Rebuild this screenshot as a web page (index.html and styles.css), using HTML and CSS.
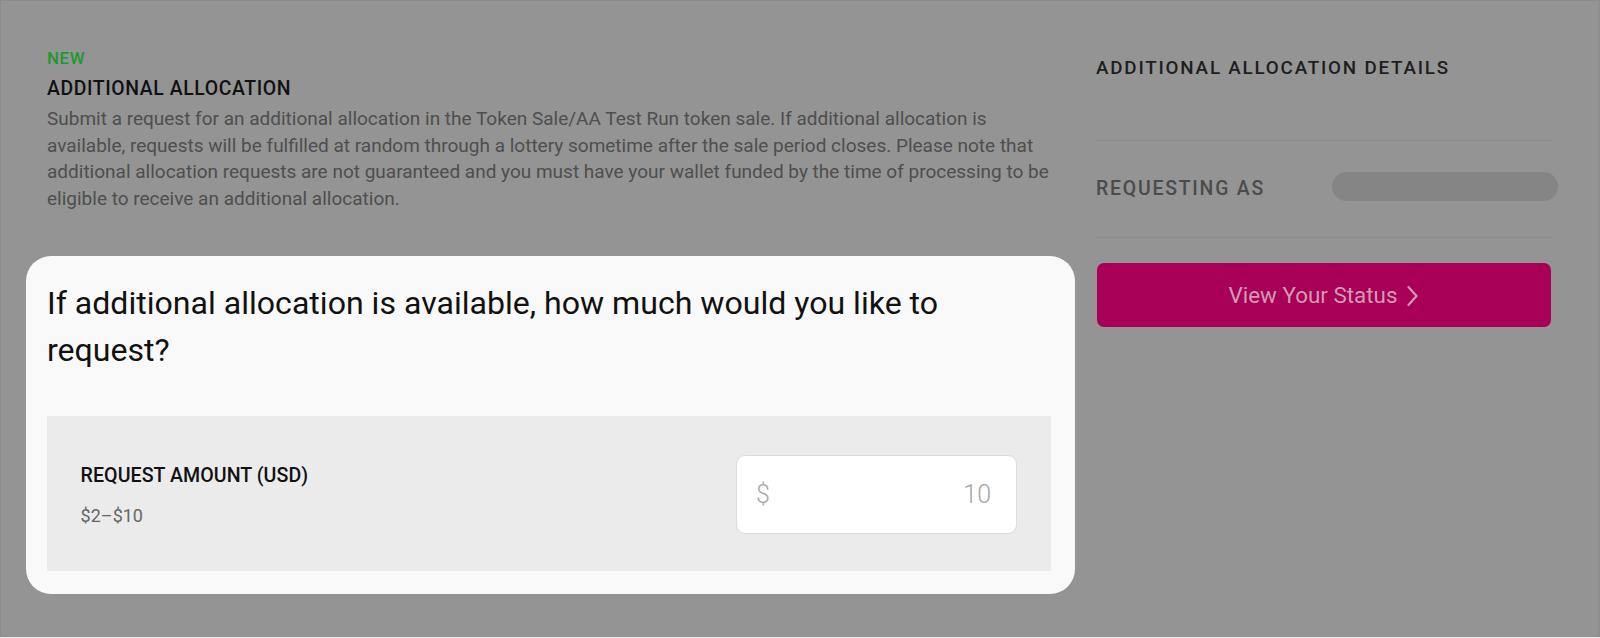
FILE: index.html
```html
<!DOCTYPE html>
<html>
<head>
<meta charset="utf-8">
<link rel="stylesheet" href="styles.css">
</head>
<body>
<div class="frame">
  <div class="layout">
    <main class="main">
      <div class="eyebrow">NEW</div>
      <h1 class="heading">ADDITIONAL ALLOCATION</h1>
      <p class="intro">Submit a request for an additional allocation in the Token Sale/AA Test Run token sale. If additional allocation is available, requests will be fulfilled at random through a lottery sometime after the sale period closes. Please note that additional allocation requests are not guaranteed and you must have your wallet funded by the time of processing to be eligible to receive an additional allocation.</p>
      <section class="card">
        <h2 class="question">If additional allocation is available, how much would you like to request?</h2>
        <div class="field">
          <div class="field-text">
            <div class="field-label">REQUEST AMOUNT (USD)</div>
            <div class="field-range">$2–$10</div>
          </div>
          <div class="input">
            <span class="currency">$</span>
            <span class="amount">10</span>
          </div>
        </div>
      </section>
    </main>
    <aside class="side">
      <h3 class="side-title">ADDITIONAL ALLOCATION DETAILS</h3>
      <div class="side-row">
        <span class="side-label">REQUESTING AS</span>
        <span class="skeleton"></span>
      </div>
      <button class="status-btn">View Your Status
        <svg class="chev" width="13" height="24" viewBox="0 0 13 24"><path d="M2.5 3 L10.5 12 L2.5 21" fill="none" stroke="currentColor" stroke-width="2.2" stroke-linecap="round" stroke-linejoin="round"/></svg>
      </button>
    </aside>
  </div>
</div>
</body>
</html>
```

FILE: styles.css
```css
* { box-sizing: border-box; }
html, body { margin: 0; padding: 0; }
body {
  width: 1600px;
  height: 638px;
  background: #e6e6e6;
  font-family: Roboto, "Liberation Sans", sans-serif;
  overflow: hidden;
}
.frame {
  width: 1600px;
  height: 637px;
  background: #949494;
  border-top: 1px solid #8a8a90;
  border-left: 1px solid #8a8a90;
  border-right: 2px solid #8e8e92;
}
.layout {
  display: flex;
  gap: 45px;
  padding: 47px 0 0 46px;
}
.main {
  width: 1004px;
  flex: none;
}
.eyebrow {
  color: #1b9a2c;
  font-size: 16.8px;
  font-weight: 500;
  line-height: 20px;
  letter-spacing: 0.7px;
}
.heading {
  margin: 9px 0 0;
  font-size: 19.4px;
  font-weight: 500;
  line-height: 24px;
  letter-spacing: 0.6px;
  color: #111;
}
.intro {
  margin: 0;
  padding-top: 5px;
  font-size: 19px;
  line-height: 26.5px;
  color: #4e4e4e;
}
.card {
  margin: 44px 0 0 -21px;
  width: 1049px;
  background: #f9f9f9;
  border-radius: 25px;
  padding: 24px 24px 23px 21px;
}
.question {
  margin: 0;
  max-width: 960px;
  font-size: 32.1px;
  font-weight: 400;
  line-height: 47px;
  color: #111;
}
.field {
  margin-top: 42px;
  height: 155px;
  background: #ebebeb;
  display: flex;
  align-items: center;
  justify-content: space-between;
  padding: 2px 34px 0 33.6px;
}
.field-text { padding-top: 3px; }
.field-label {
  font-size: 19.6px;
  font-weight: 500;
  color: #111;
  line-height: 22px;
  letter-spacing: 0.05px;
}
.field-range {
  margin-top: 18.5px;
  font-size: 18px;
  color: #666;
  line-height: 22px;
}
.input {
  width: 281px;
  height: 79px;
  background: #fff;
  border: 1px solid #d9dbe8;
  border-radius: 9px;
  display: flex;
  align-items: center;
  justify-content: space-between;
  padding: 0 25px 0 19px;
  font-size: 25px;
  font-weight: 300;
  color: #a6a6a6;
}
.side {
  width: 457px;
  flex: none;
}
.side-title {
  margin: 8px 0 0;
  font-size: 18.8px;
  font-weight: 500;
  line-height: 24px;
  letter-spacing: 1.8px;
  color: #1e1e1e;
  padding-bottom: 60px;
  border-bottom: 1px solid #8a8a91;
}
.side-row {
  display: flex;
  align-items: center;
  justify-content: space-between;
  height: 97px;
  border-bottom: 1px solid #8a8a91;
}
.side-label {
  font-size: 19.4px;
  font-weight: 500;
  letter-spacing: 1.8px;
  color: #4b4b4b;
  margin-top: -2px;
}
.skeleton {
  width: 226px;
  height: 29px;
  border-radius: 15px;
  background: #858585;
  margin-right: -5px;
  margin-top: -6px;
}
.status-btn {
  margin-top: 25px;
  margin-left: 1px;
  width: 454px;
  height: 64px;
  border: none;
  border-radius: 7px;
  background: #a80056;
  color: #d29ab5;
  font-family: Roboto, "Liberation Sans", sans-serif;
  font-size: 22.4px;
  display: flex;
  align-items: center;
  justify-content: center;
  gap: 9px;
  padding: 0;
}
.chev { margin-top: 1px; }
```
